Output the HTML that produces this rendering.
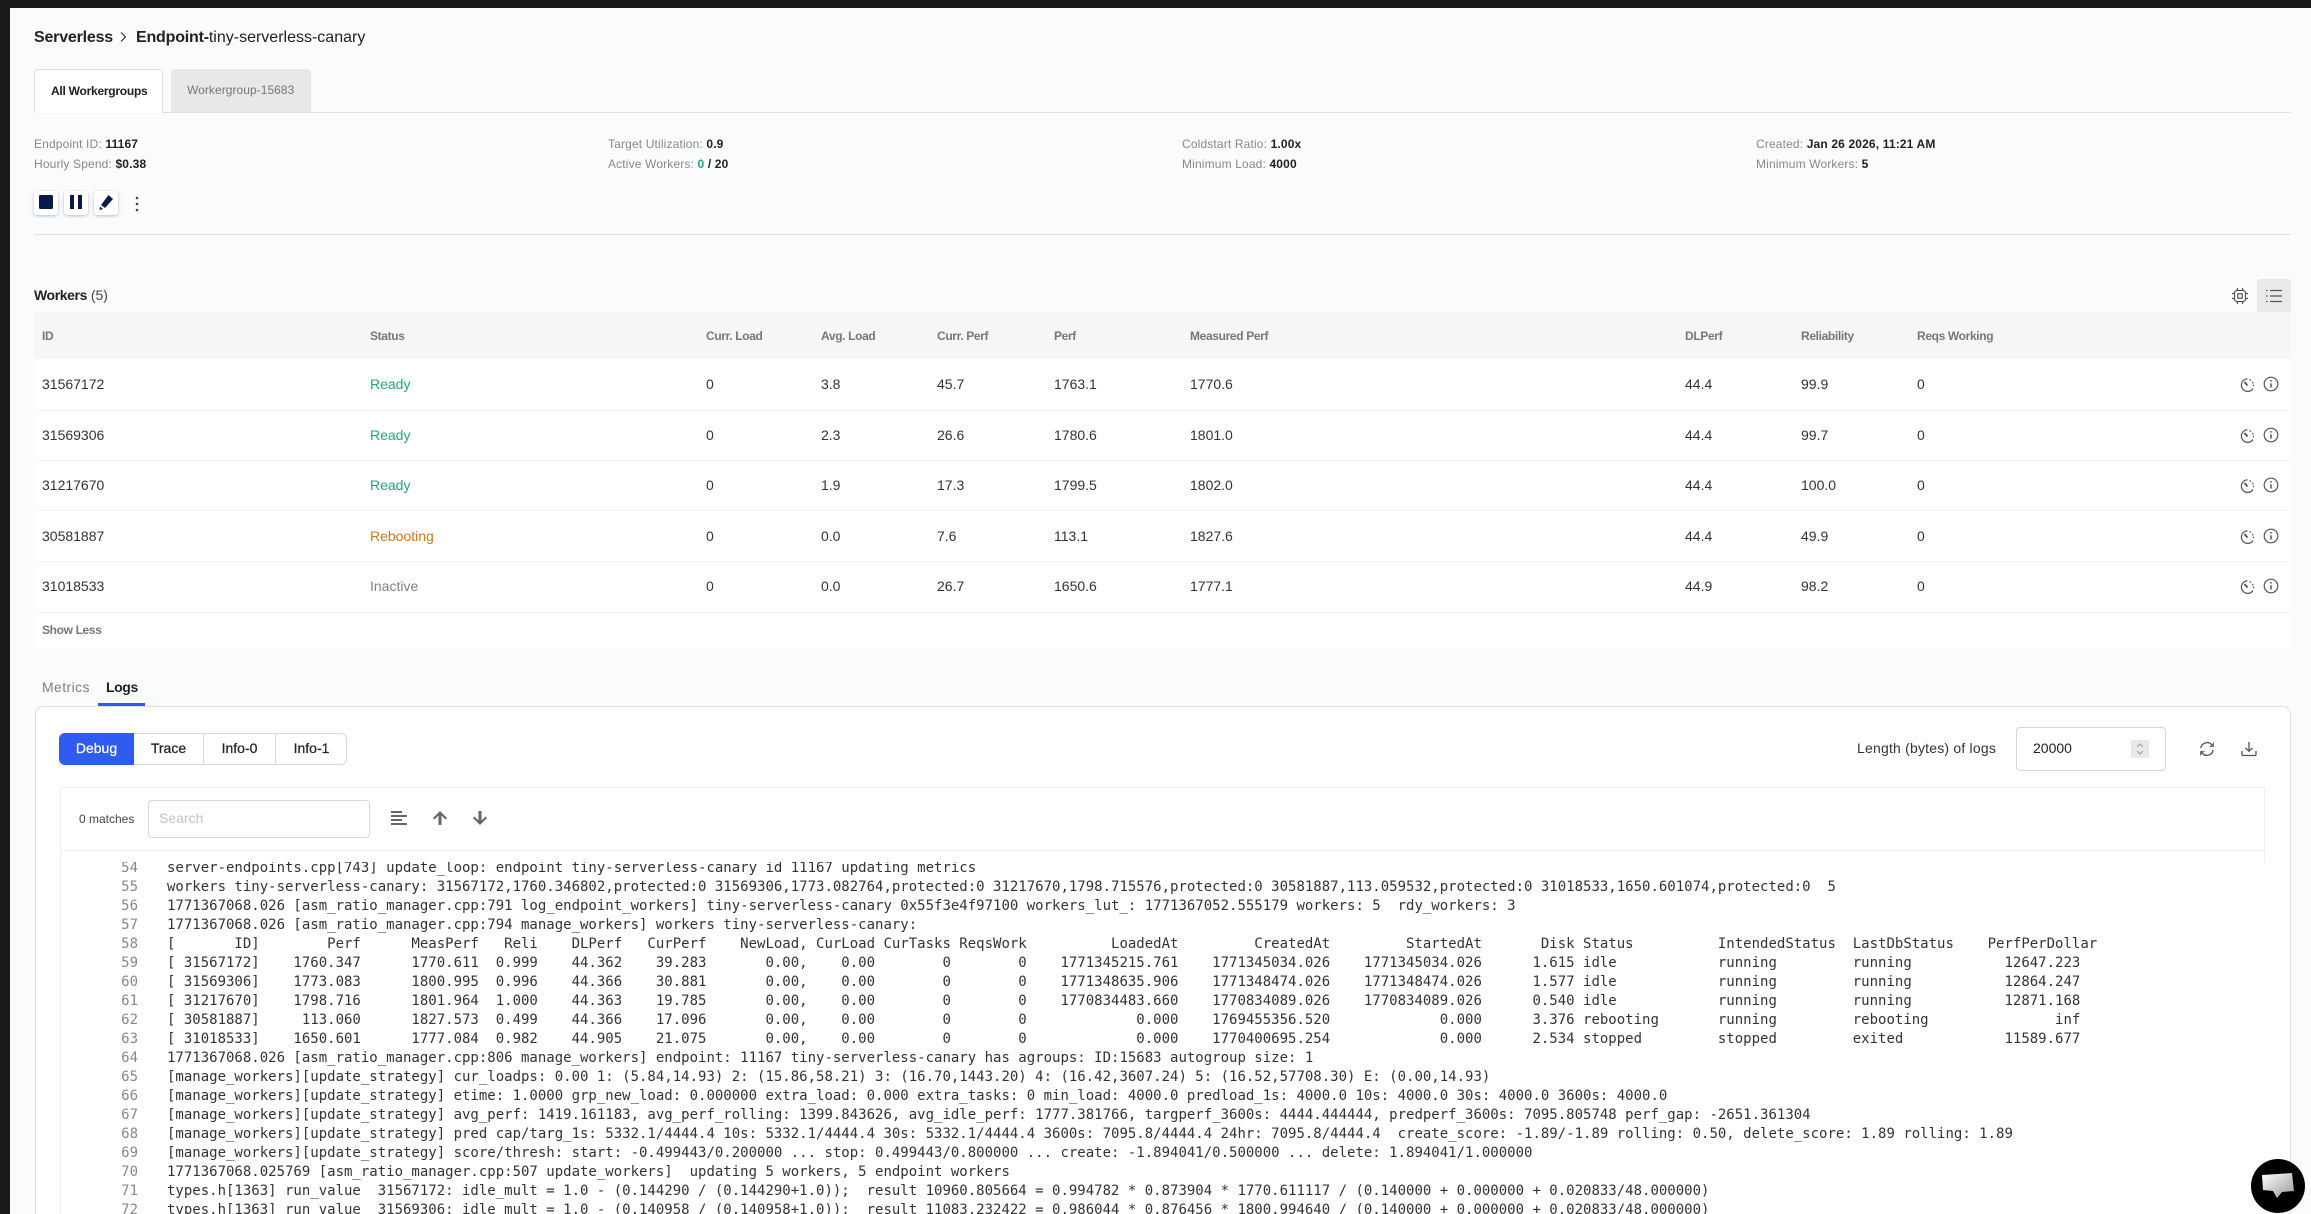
<!DOCTYPE html>
<html><head><meta charset="utf-8"><style>
html,body{margin:0;padding:0;width:2311px;height:1214px;overflow:hidden;background:#fafbfd;font-family:"Liberation Sans",sans-serif;color:#222}
#root{position:relative;width:2311px;height:1214px;overflow:hidden}
.a{position:absolute}
.t{position:absolute;white-space:nowrap;line-height:20px}
b{font-weight:700}
.info{font-size:12px;color:#888;letter-spacing:.15px}.info b{color:#222}
.th{font-size:12px;font-weight:700;color:#777;top:326px;letter-spacing:-.35px}
.td{font-size:14px;color:#333}
.btn{position:absolute;top:191px;width:24px;height:24px;background:#fff;border-radius:3px;box-shadow:0 1px 3px rgba(0,0,0,.25)}
.rule{position:absolute;left:34px;width:2257px;height:1px;background:#dcdfe3}
.seg{position:absolute;top:733px;height:32px;line-height:31px;text-align:center;font-size:14px;box-sizing:border-box;-webkit-text-stroke:.25px currentColor}
#log{position:absolute;left:61px;top:862px;width:2204px;height:352px;background:#fff;overflow:hidden}
#nums,#txt{position:absolute;top:-3px;margin:0;font:14px/19px "DejaVu Sans Mono",monospace;white-space:pre}
#nums{left:0;width:77px;text-align:right;color:#888}
#txt{left:106px;color:#333}
</style></head><body><div id="root">
<div class="a" style="left:0;top:0;width:2311px;height:8px;background:#1a1a1a"></div>
<div class="a" style="left:0;top:0;width:10px;height:1214px;background:#1a1a1a"></div>

<div class="t" style="left:34px;top:28px;font-size:16px;letter-spacing:-.2px"><b>Serverless</b></div>
<svg class="a" style="left:118px;top:31px" width="10" height="12" viewBox="0 0 10 12"><path d="M3 1.5 7.5 6 3 10.500" fill="none" stroke="#333" stroke-width="1.200"/></svg>
<div class="t" style="left:136px;top:28px;font-size:16px"><b style="letter-spacing:-.2px">Endpoint-</b>tiny-serverless-canary</div>

<div class="a" style="left:34px;top:69px;width:129px;height:44px;box-sizing:border-box;background:#fff;border:1px solid #dcdfe3;border-bottom:0;border-radius:4px 4px 0 0"></div>
<div class="a" style="left:171px;top:69px;width:140px;height:43px;background:#e8e8e8;border-radius:4px 4px 0 0"></div>
<div class="rule" style="top:112px"></div>
<div class="a" style="left:35px;top:112px;width:127px;height:1px;background:#fff"></div>
<div class="t" style="left:51px;top:81px;font-size:12px;font-weight:700;letter-spacing:-.25px">All Workergroups</div>
<div class="t" style="left:187px;top:80px;font-size:12px;color:#777;letter-spacing:.05px">Workergroup-15683</div>

<div class="t info" style="left:34px;top:134px">Endpoint ID: <b>11167</b></div>
<div class="t info" style="left:34px;top:154px">Hourly Spend: <b>$0.38</b></div>
<div class="t info" style="left:608px;top:134px">Target Utilization: <b>0.9</b></div>
<div class="t info" style="left:608px;top:154px">Active Workers: <b style="color:#1fa97a">0</b><b> / 20</b></div>
<div class="t info" style="left:1182px;top:134px">Coldstart Ratio: <b>1.00x</b></div>
<div class="t info" style="left:1182px;top:154px">Minimum Load: <b>4000</b></div>
<div class="t info" style="left:1756px;top:134px">Created: <b>Jan 26 2026, 11:21 AM</b></div>
<div class="t info" style="left:1756px;top:154px">Minimum Workers: <b>5</b></div>

<div class="btn" style="left:34px"><div class="a" style="left:5px;top:4px;width:14px;height:14px;background:#0a1a4a;border-radius:1.500px"></div></div>
<div class="btn" style="left:64px"><div class="a" style="left:6px;top:4px;width:4px;height:14px;background:#0a1a4a"></div><div class="a" style="left:14px;top:4px;width:4px;height:14px;background:#0a1a4a"></div></div>
<div class="btn" style="left:94px"><svg class="a" style="left:4px;top:3px" width="16" height="17" viewBox="0 0 16 17"><path d="M10.500 1 15 5 7 14 3 11ZM2 12.500 5 15 1.500 16Z" fill="#0a1a4a"/></svg></div>
<svg class="a" style="left:134px;top:196px" width="6" height="16" viewBox="0 0 6 16"><g fill="#444"><circle cx="3" cy="2" r="1.300"/><circle cx="3" cy="8" r="1.300"/><circle cx="3" cy="14" r="1.300"/></g></svg>
<div class="rule" style="top:234px"></div>

<div class="t" style="left:34px;top:285px;font-size:14px;color:#444"><b style="color:#222;letter-spacing:-.4px">Workers</b> (5)</div>
<svg class="a" style="left:2231px;top:287px" width="18" height="18" viewBox="0 0 18 18" fill="none" stroke="#555" stroke-width="1.200"><rect x="3.500" y="3.500" width="11" height="11" rx="2.500"/><rect x="6.800" y="6.800" width="4.400" height="4.400"/><path d="M6.500 1v2.500M11.500 1v2.500M6.500 14.500V17M11.500 14.500V17M1 6.500h2.500M1 11.500h2.500M14.500 6.500H17M14.500 11.500H17"/></svg>
<div class="a" style="left:2257px;top:279px;width:34px;height:34px;background:#e9e9e9;border-radius:3px"></div>
<svg class="a" style="left:2265px;top:288px" width="18" height="16" viewBox="0 0 18 16" fill="none" stroke="#555" stroke-width="1.300"><path d="M5 2.500h12M5 8h12M5 13.500h12M1 2.500h1.500M1 8h1.500M1 13.500h1.500"/></svg>

<div class="a" style="left:34px;top:312px;width:2257px;height:47px;background:#f6f6f6"></div>
<div class="a" style="left:36px;top:359px;width:2255px;height:289px;background:#fff"></div>
<div class="a" style="left:36px;top:410px;width:2255px;height:1px;background:#f2f3f4"></div>
<div class="a" style="left:36px;top:460px;width:2255px;height:1px;background:#f2f3f4"></div>
<div class="a" style="left:36px;top:510px;width:2255px;height:1px;background:#f2f3f4"></div>
<div class="a" style="left:36px;top:561px;width:2255px;height:1px;background:#f2f3f4"></div>
<div class="a" style="left:36px;top:612px;width:2255px;height:1px;background:#f2f3f4"></div>

<div class="t th" style="left:42px">ID</div><div class="t th" style="left:370px">Status</div><div class="t th" style="left:706px">Curr. Load</div><div class="t th" style="left:821px">Avg. Load</div><div class="t th" style="left:937px">Curr. Perf</div><div class="t th" style="left:1054px">Perf</div><div class="t th" style="left:1190px">Measured Perf</div><div class="t th" style="left:1685px">DLPerf</div><div class="t th" style="left:1801px">Reliability</div><div class="t th" style="left:1917px">Reqs Working</div>

<div class="t td" style="left:42px;top:374px">31567172</div><div class="t td" style="left:370px;top:374px;color:#1fa97a">Ready</div><div class="t td" style="left:706px;top:374px">0</div><div class="t td" style="left:821px;top:374px">3.8</div><div class="t td" style="left:937px;top:374px">45.7</div><div class="t td" style="left:1054px;top:374px">1763.1</div><div class="t td" style="left:1190px;top:374px">1770.6</div><div class="t td" style="left:1685px;top:374px">44.4</div><div class="t td" style="left:1801px;top:374px">99.9</div><div class="t td" style="left:1917px;top:374px">0</div>

<div class="t td" style="left:42px;top:425px">31569306</div><div class="t td" style="left:370px;top:425px;color:#1fa97a">Ready</div><div class="t td" style="left:706px;top:425px">0</div><div class="t td" style="left:821px;top:425px">2.3</div><div class="t td" style="left:937px;top:425px">26.6</div><div class="t td" style="left:1054px;top:425px">1780.6</div><div class="t td" style="left:1190px;top:425px">1801.0</div><div class="t td" style="left:1685px;top:425px">44.4</div><div class="t td" style="left:1801px;top:425px">99.7</div><div class="t td" style="left:1917px;top:425px">0</div>

<div class="t td" style="left:42px;top:475px">31217670</div><div class="t td" style="left:370px;top:475px;color:#1fa97a">Ready</div><div class="t td" style="left:706px;top:475px">0</div><div class="t td" style="left:821px;top:475px">1.9</div><div class="t td" style="left:937px;top:475px">17.3</div><div class="t td" style="left:1054px;top:475px">1799.5</div><div class="t td" style="left:1190px;top:475px">1802.0</div><div class="t td" style="left:1685px;top:475px">44.4</div><div class="t td" style="left:1801px;top:475px">100.0</div><div class="t td" style="left:1917px;top:475px">0</div>

<div class="t td" style="left:42px;top:526px">30581887</div><div class="t td" style="left:370px;top:526px;color:#d0771f">Rebooting</div><div class="t td" style="left:706px;top:526px">0</div><div class="t td" style="left:821px;top:526px">0.0</div><div class="t td" style="left:937px;top:526px">7.6</div><div class="t td" style="left:1054px;top:526px">113.1</div><div class="t td" style="left:1190px;top:526px">1827.6</div><div class="t td" style="left:1685px;top:526px">44.4</div><div class="t td" style="left:1801px;top:526px">49.9</div><div class="t td" style="left:1917px;top:526px">0</div>

<div class="t td" style="left:42px;top:576px">31018533</div><div class="t td" style="left:370px;top:576px;color:#808080">Inactive</div><div class="t td" style="left:706px;top:576px">0</div><div class="t td" style="left:821px;top:576px">0.0</div><div class="t td" style="left:937px;top:576px">26.7</div><div class="t td" style="left:1054px;top:576px">1650.6</div><div class="t td" style="left:1190px;top:576px">1777.1</div><div class="t td" style="left:1685px;top:576px">44.9</div><div class="t td" style="left:1801px;top:576px">98.2</div><div class="t td" style="left:1917px;top:576px">0</div>

<svg width="0" height="0" style="position:absolute"><defs>
<g id="ck" fill="none" stroke="#555" stroke-width="1.200"><path d="M8.500 1.800A6.300 6.300 0 1 0 14 11.500"/><path d="M11 2.800l.6.400M13.700 5.300l.3.700M14.500 8.200v.6" stroke-linecap="round"/><path d="M5.500 5 8.500 8.500" stroke-width="1.800"/></g>
<g id="in" fill="none" stroke="#555" stroke-width="1.200"><circle cx="8" cy="8" r="6.800"/><path d="M8 7.300V11.500" stroke-width="1.500"/><circle cx="8" cy="4.900" r=".9" fill="#555" stroke="none"/></g>
</defs></svg>
<svg class="a" style="left:2239px;top:377px" width="16" height="16"><use href="#ck"/></svg><svg class="a" style="left:2263px;top:376px" width="16" height="16"><use href="#in"/></svg>
<svg class="a" style="left:2239px;top:428px" width="16" height="16"><use href="#ck"/></svg><svg class="a" style="left:2263px;top:427px" width="16" height="16"><use href="#in"/></svg>
<svg class="a" style="left:2239px;top:478px" width="16" height="16"><use href="#ck"/></svg><svg class="a" style="left:2263px;top:477px" width="16" height="16"><use href="#in"/></svg>
<svg class="a" style="left:2239px;top:529px" width="16" height="16"><use href="#ck"/></svg><svg class="a" style="left:2263px;top:528px" width="16" height="16"><use href="#in"/></svg>
<svg class="a" style="left:2239px;top:579px" width="16" height="16"><use href="#ck"/></svg><svg class="a" style="left:2263px;top:578px" width="16" height="16"><use href="#in"/></svg>

<div class="t" style="left:42px;top:620px;font-size:12px;font-weight:700;color:#777;letter-spacing:-.35px">Show Less</div>

<div class="t" style="left:42px;top:677px;font-size:14px;color:#808080;letter-spacing:.4px">Metrics</div>
<div class="t" style="left:106px;top:677px;font-size:14px;font-weight:700;color:#222;letter-spacing:-.4px">Logs</div>

<div class="a" style="left:35px;top:706px;width:2256px;height:520px;box-sizing:border-box;background:#fff;border:1px solid #dcdfe3;border-radius:8px"></div>
<div class="a" style="left:98px;top:703px;width:47px;height:3px;background:#2f5bf0"></div>

<div class="a" style="left:59px;top:733px;width:288px;height:32px;box-sizing:border-box;background:#fff;border:1px solid #d5d7da;border-radius:6px"></div>
<div class="seg" style="left:59px;width:75px;background:#2f5bf0;color:#fff;border-radius:6px 0 0 6px">Debug</div>
<div class="seg" style="left:134px;width:70px;color:#222;border-right:1.500px solid #d5d7da">Trace</div>
<div class="seg" style="left:204px;width:72px;color:#222;border-right:1.500px solid #d5d7da">Info-0</div>
<div class="seg" style="left:276px;width:71px;color:#222">Info-1</div>

<div class="t" style="left:1857px;top:738px;font-size:14px;color:#333;letter-spacing:.2px">Length (bytes) of logs</div>
<div class="a" style="left:2016px;top:727px;width:150px;height:44px;box-sizing:border-box;background:#fff;border:1px solid #d5d7da;border-radius:4px"></div>
<div class="t" style="left:2033px;top:738px;font-size:14px;color:#222">20000</div>
<div class="a" style="left:2131px;top:740px;width:18px;height:18px;background:#e9e9e9"></div>
<svg class="a" style="left:2135px;top:742px" width="10" height="14" viewBox="0 0 10 14" fill="none" stroke="#999" stroke-width="1"><path d="M2 5 5 2 8 5M2 9 5 12 8 9"/></svg>
<svg class="a" style="left:2199px;top:741px" width="16" height="16" viewBox="0 0 16 16" fill="none" stroke="#555" stroke-width="1.300"><path d="M1.800 7A6.300 6.300 0 0 1 12.500 3.500L14 5M14.200 9A6.300 6.300 0 0 1 3.500 12.500L2 11"/><path d="M14.300 1.500V5.300H10.500M1.700 14.500V10.700H5.500" stroke-width="1.100"/></svg>
<svg class="a" style="left:2241px;top:741px" width="16" height="16" viewBox="0 0 16 16" fill="none" stroke="#555" stroke-width="1.300"><path d="M8 1v9M4.500 6.800 8 10.300l3.500-3.500M1 10v3.500a1 1 0 0 0 1 1h12a1 1 0 0 0 1-1V10"/></svg>

<div class="a" style="left:60px;top:787px;width:2205px;height:440px;box-sizing:border-box;background:#fff;border:1px solid #eeeff1"></div>
<div class="a" style="left:60px;top:850px;width:2205px;height:1px;background:#eeeff1"></div>
<div class="t" style="left:79px;top:809px;font-size:12px;color:#444">0 matches</div>
<div class="a" style="left:148px;top:800px;width:222px;height:38px;box-sizing:border-box;background:#fff;border:1px solid #d5d7da;border-radius:4px"></div>
<div class="t" style="left:159px;top:808px;font-size:14px;color:#c4c4c4">Search</div>
<svg class="a" style="left:391px;top:810px" width="16" height="16" viewBox="0 0 16 16" fill="#666"><rect width="11" height="2" y="1"/><rect width="16" height="2" y="5"/><rect width="11" height="2" y="9"/><rect width="16" height="2" y="13"/></svg>
<svg class="a" style="left:432px;top:810px" width="16" height="16" viewBox="0 0 16 16" fill="#666"><path d="M8 1 15 8 13.500 9.500 9.500 5.500V15H6.500V5.500L2.500 9.500 1 8Z"/></svg>
<svg class="a" style="left:472px;top:810px" width="16" height="16" viewBox="0 0 16 16" fill="#666"><path d="M8 15 15 8 13.500 6.500 9.500 10.500V1H6.500V10.500L2.500 6.500 1 8Z"/></svg>

<div id="log"><pre id="nums">54
55
56
57
58
59
60
61
62
63
64
65
66
67
68
69
70
71
72</pre><pre id="txt">server-endpoints.cpp[743] update_loop: endpoint tiny-serverless-canary id 11167 updating metrics
workers tiny-serverless-canary: 31567172,1760.346802,protected:0 31569306,1773.082764,protected:0 31217670,1798.715576,protected:0 30581887,113.059532,protected:0 31018533,1650.601074,protected:0  5
1771367068.026 [asm_ratio_manager.cpp:791 log_endpoint_workers] tiny-serverless-canary 0x55f3e4f97100 workers_lut_: 1771367052.555179 workers: 5  rdy_workers: 3
1771367068.026 [asm_ratio_manager.cpp:794 manage_workers] workers tiny-serverless-canary:
[       ID]        Perf      MeasPerf   Reli    DLPerf   CurPerf    NewLoad, CurLoad CurTasks ReqsWork          LoadedAt         CreatedAt         StartedAt       Disk Status          IntendedStatus  LastDbStatus    PerfPerDollar
[ 31567172]    1760.347      1770.611  0.999    44.362    39.283       0.00,    0.00        0        0    1771345215.761    1771345034.026    1771345034.026      1.615 idle            running         running           12647.223
[ 31569306]    1773.083      1800.995  0.996    44.366    30.881       0.00,    0.00        0        0    1771348635.906    1771348474.026    1771348474.026      1.577 idle            running         running           12864.247
[ 31217670]    1798.716      1801.964  1.000    44.363    19.785       0.00,    0.00        0        0    1770834483.660    1770834089.026    1770834089.026      0.540 idle            running         running           12871.168
[ 30581887]     113.060      1827.573  0.499    44.366    17.096       0.00,    0.00        0        0             0.000    1769455356.520             0.000      3.376 rebooting       running         rebooting               inf
[ 31018533]    1650.601      1777.084  0.982    44.905    21.075       0.00,    0.00        0        0             0.000    1770400695.254             0.000      2.534 stopped         stopped         exited            11589.677
1771367068.026 [asm_ratio_manager.cpp:806 manage_workers] endpoint: 11167 tiny-serverless-canary has agroups: ID:15683 autogroup size: 1
[manage_workers][update_strategy] cur_loadps: 0.00 1: (5.84,14.93) 2: (15.86,58.21) 3: (16.70,1443.20) 4: (16.42,3607.24) 5: (16.52,57708.30) E: (0.00,14.93)
[manage_workers][update_strategy] etime: 1.0000 grp_new_load: 0.000000 extra_load: 0.000 extra_tasks: 0 min_load: 4000.0 predload_1s: 4000.0 10s: 4000.0 30s: 4000.0 3600s: 4000.0
[manage_workers][update_strategy] avg_perf: 1419.161183, avg_perf_rolling: 1399.843626, avg_idle_perf: 1777.381766, targperf_3600s: 4444.444444, predperf_3600s: 7095.805748 perf_gap: -2651.361304
[manage_workers][update_strategy] pred cap/targ_1s: 5332.1/4444.4 10s: 5332.1/4444.4 30s: 5332.1/4444.4 3600s: 7095.8/4444.4 24hr: 7095.8/4444.4  create_score: -1.89/-1.89 rolling: 0.50, delete_score: 1.89 rolling: 1.89
[manage_workers][update_strategy] score/thresh: start: -0.499443/0.200000 ... stop: 0.499443/0.800000 ... create: -1.894041/0.500000 ... delete: 1.894041/1.000000
1771367068.025769 [asm_ratio_manager.cpp:507 update_workers]  updating 5 workers, 5 endpoint workers
types.h[1363] run_value  31567172: idle_mult = 1.0 - (0.144290 / (0.144290+1.0));  result 10960.805664 = 0.994782 * 0.873904 * 1770.611117 / (0.140000 + 0.000000 + 0.020833/48.000000)
types.h[1363] run_value  31569306: idle_mult = 1.0 - (0.140958 / (0.140958+1.0));  result 11083.232422 = 0.986044 * 0.876456 * 1800.994640 / (0.140000 + 0.000000 + 0.020833/48.000000)</pre></div>

<div class="a" style="left:2251px;top:1159px;width:54px;height:54px;border-radius:50%;background:#000"></div>
<svg class="a" style="left:2261px;top:1172px" width="34" height="30" viewBox="0 0 34 30"><defs><linearGradient id="g" x1="0" y1="0" x2="1" y2="1"><stop offset="0" stop-color="#fff"/><stop offset="1" stop-color="#999"/></linearGradient></defs><path d="M2 3 32 1 34 19 22 20 17 26 13 19 3 18Z" fill="url(#g)" transform="translate(-1 0)"/></svg>
</div></body></html>
